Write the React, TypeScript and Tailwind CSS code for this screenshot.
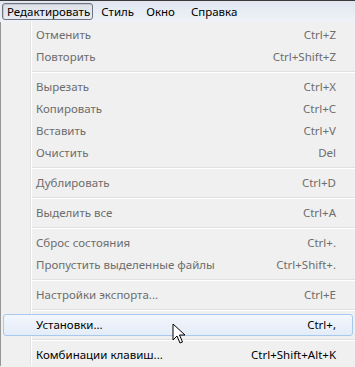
import React from "react";

type Item = { label: string; shortcut: string; enabled?: boolean; active?: boolean } | "sep";

const ITEMS: Item[] = [
  { label: "Отменить", shortcut: "Ctrl+Z" },
  { label: "Повторить", shortcut: "Ctrl+Shift+Z" },
  "sep",
  { label: "Вырезать", shortcut: "Ctrl+X" },
  { label: "Копировать", shortcut: "Ctrl+C" },
  { label: "Вставить", shortcut: "Ctrl+V" },
  { label: "Очистить", shortcut: "Del" },
  "sep",
  { label: "Дублировать", shortcut: "Ctrl+D" },
  "sep",
  { label: "Выделить все", shortcut: "Ctrl+A" },
  "sep",
  { label: "Сброс состояния", shortcut: "Ctrl+." },
  { label: "Пропустить выделенные файлы", shortcut: "Ctrl+Shift+." },
  "sep",
  { label: "Настройки экспорта...", shortcut: "Ctrl+E" },
  "sep",
  { label: "Установки...", shortcut: "Ctrl+,", enabled: true, active: true },
  "sep",
  { label: "Комбинации клавиш...", shortcut: "Ctrl+Shift+Alt+K", enabled: true },
];

function Cursor() {
  return (
    <svg className="absolute left-[172px] top-[323px]" width="14" height="22" viewBox="0 0 14 22">
      <path d="M1 1 L1 17 L5 13 L8 20 L10.5 19 L7.5 12 L13 12 Z" fill="#fff" stroke="#000" strokeWidth="1" strokeLinejoin="round" />
    </svg>
  );
}

export default function App() {
  return (
    <div className="relative w-[355px] h-[367px] overflow-hidden bg-[#f0f0f0] text-[11.5px] font-['Noto_Sans','Open_Sans',sans-serif]">
      {/* Menu bar */}
      <div className="h-[22px] border-t border-[#3a3a3a] bg-gradient-to-b from-[#e1e7f1] to-[#eef2f8] flex items-center pl-[2px]">
        <div className="h-[17px] pl-[4px] pr-[2px] flex items-center rounded-[3px] border border-[#6e7580] bg-gradient-to-b from-[#dde2e9] to-[#e9edf2] shadow-[inset_1px_1px_0_#c4c9d1]">
          Редактировать
        </div>
        <div className="pl-[8px] pr-[4px]">Стиль</div>
        <div className="px-[8px]">Окно</div>
        <div className="px-[8px]">Справка</div>
      </div>

      {/* Dropdown */}
      <div className="relative border-l border-[#979797] pt-[2px]">
        <div className="absolute left-[29px] top-0 bottom-0 w-[2px] border-l border-[#e2e3e3] bg-white" />
        {ITEMS.map((it, i) =>
          it === "sep" ? (
            <div key={i} className="h-[8px] flex items-center pl-[30px]">
              <div className="w-full h-[2px] border-t border-[#e0e0e0] bg-white" />
            </div>
          ) : (
            <div key={i} className="h-[22px] px-[2px]">
              <div
                className={`relative h-full flex items-center justify-between pl-[32px] pr-[16px] rounded-[3px] border ${
                  it.active
                    ? "border-[#a8c8ee] bg-gradient-to-b from-[#f3f7fc] to-[#e3ecf8]"
                    : "border-transparent"
                } ${it.enabled ? "text-black" : "text-[#6d6d6d]"}`}
              >
                <span>{it.label}</span>
                <span>{it.shortcut}</span>
              </div>
            </div>
          )
        )}
      </div>
      <Cursor />
    </div>
  );
}
